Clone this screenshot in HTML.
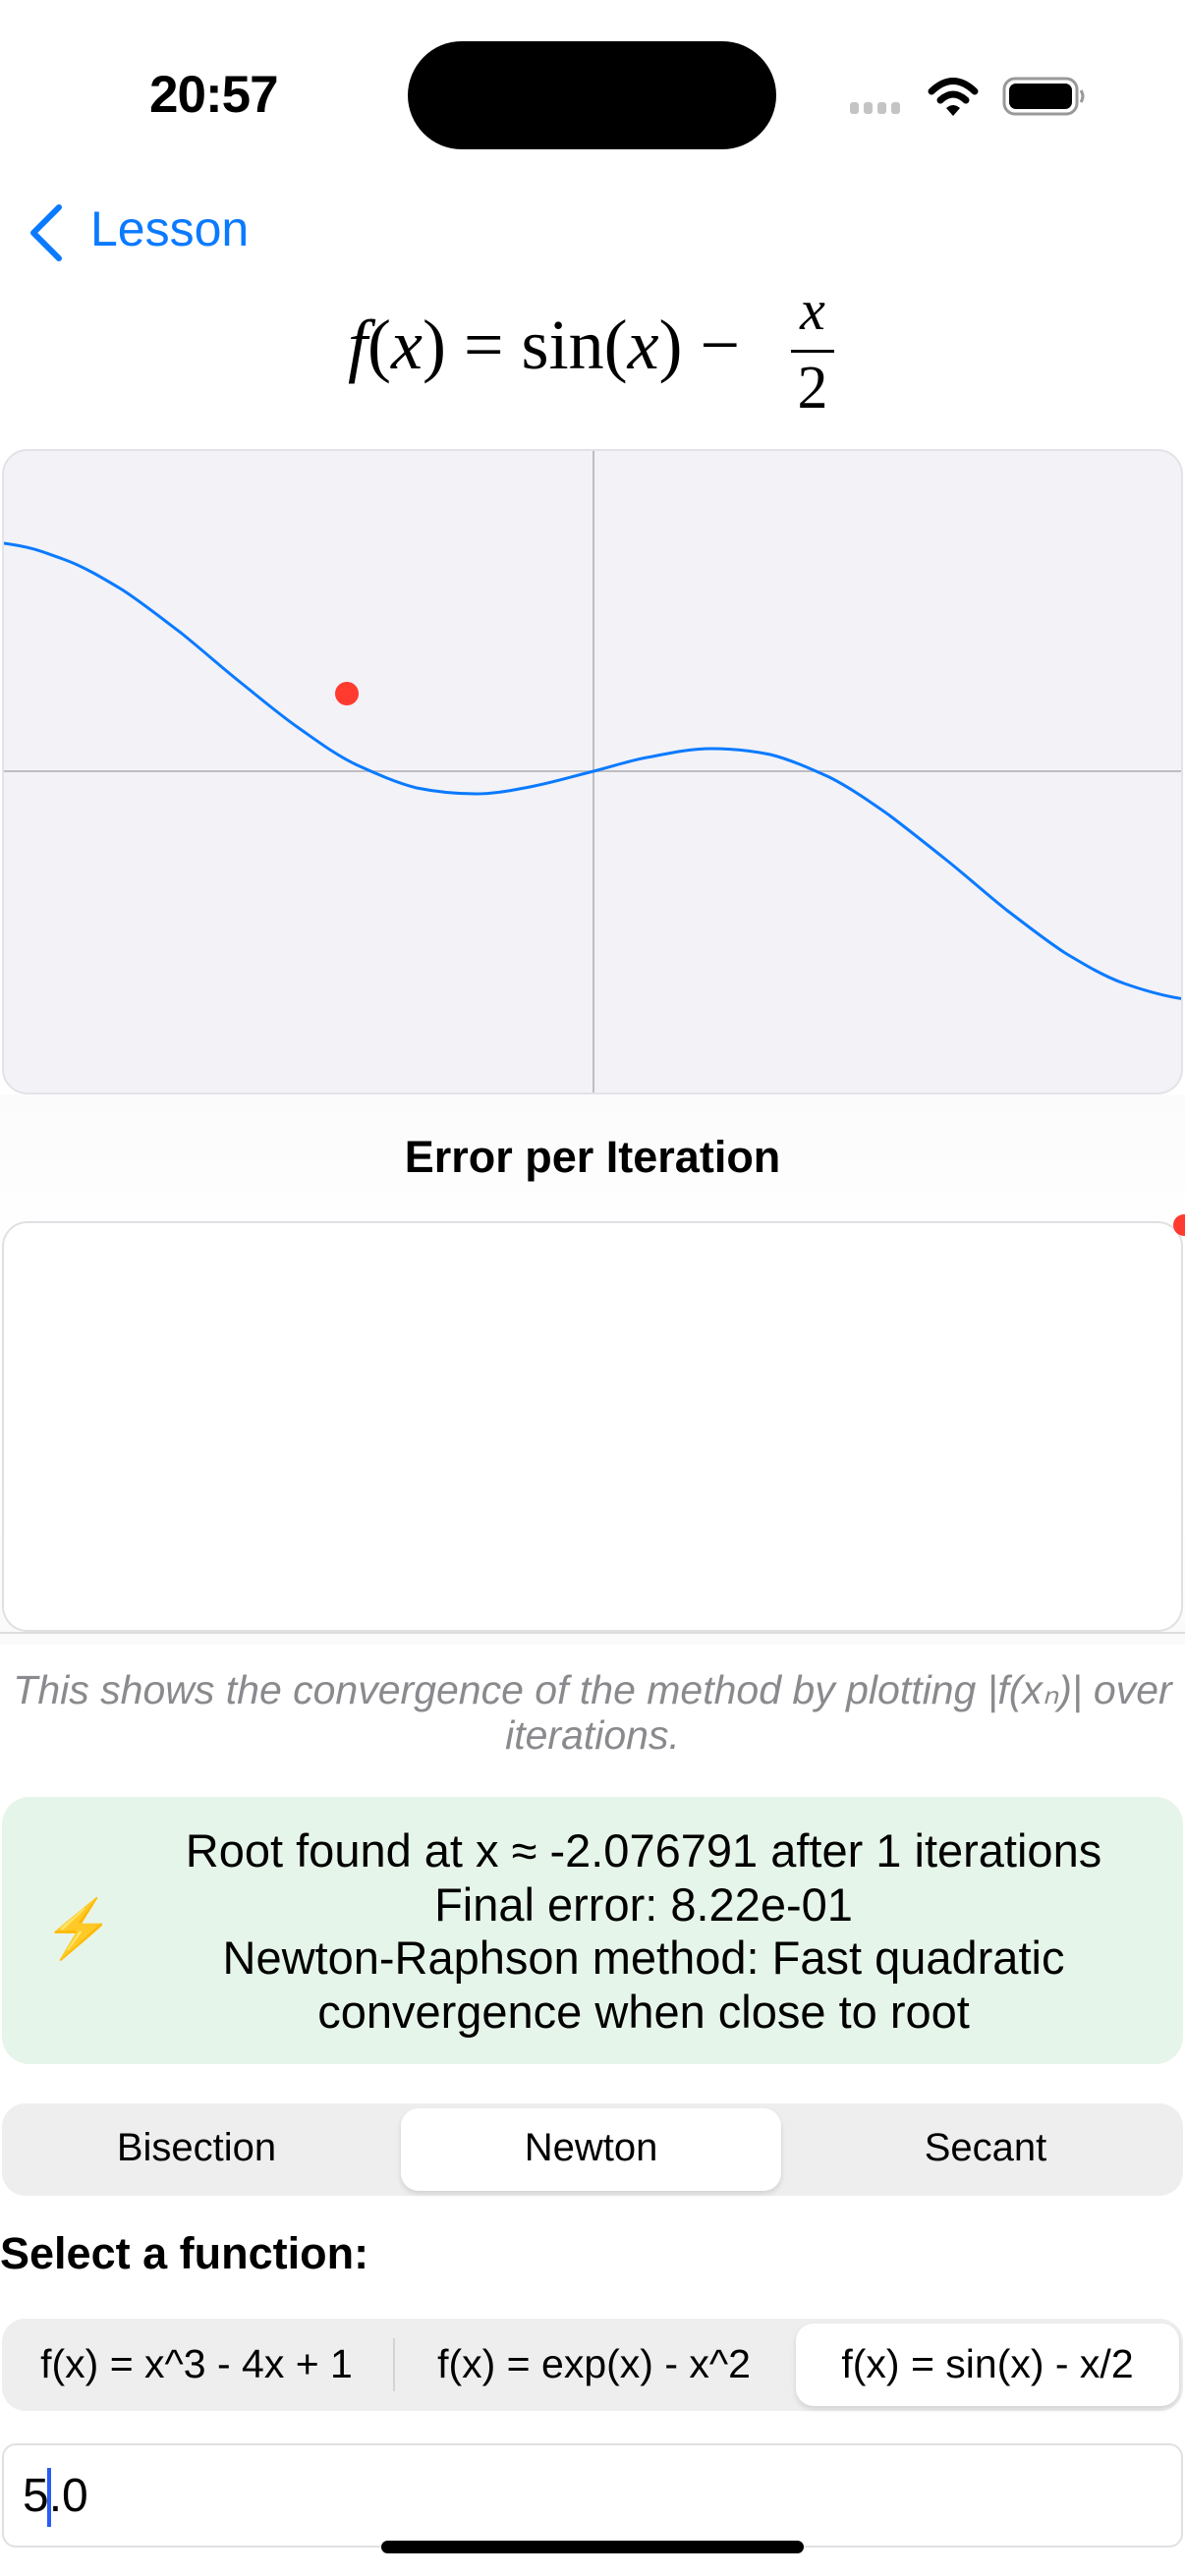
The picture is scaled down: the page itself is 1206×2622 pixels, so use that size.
<!DOCTYPE html>
<html><head><meta charset="utf-8"><style>
*{margin:0;padding:0;box-sizing:border-box}
body{width:1206px;height:2622px;background:#fff;position:relative;overflow:hidden;font-family:"Liberation Sans",sans-serif;color:#000}
.a{position:absolute}
.c{text-align:center;white-space:nowrap}
</style></head><body>
<div class="a" style="left:0;top:1114px;width:1206px;height:560px;background:linear-gradient(#fbfbfb,#fff 30%,#fff 70%,#fafafa)"></div>
<div class="a" style="left:152px;top:66px;font-size:53px;font-weight:bold;letter-spacing:-1px">20:57</div>
<div class="a" style="left:415px;top:42px;width:375px;height:110px;background:#000;border-radius:55px"></div>
<svg class="a" style="left:860px;top:70px" width="250" height="60" viewBox="0 0 250 60">
<g fill="#c4c4c4"><rect x="5" y="34" width="9" height="12" rx="3"/><rect x="19" y="34" width="9" height="12" rx="3"/><rect x="33" y="34" width="9" height="12" rx="3"/><rect x="47" y="34" width="9" height="12" rx="3"/></g>
<g fill="none" stroke="#000" stroke-width="7" stroke-linecap="round"><path d="M88 23 Q110 2 132 23"/><path d="M97 32 Q110 20 123 32"/></g>
<path d="M103 40 L110 48 L117 40 Q110 34 103 40Z" fill="#000"/>
<rect x="162" y="10" width="74" height="36" rx="11" fill="none" stroke="#999" stroke-width="3"/>
<rect x="167" y="15" width="64" height="26" rx="7" fill="#000"/>
<path d="M240 22 q4 6 0 12" stroke="#999" stroke-width="3" fill="none"/>
</svg>
<svg class="a" style="left:24px;top:206px" width="44" height="62"><path d="M36 5 L10 31 L36 57" fill="none" stroke="#0a7aff" stroke-width="6" stroke-linecap="round" stroke-linejoin="round"/></svg>
<div class="a" style="left:92px;top:204px;font-size:50px;color:#0a7aff">Lesson</div>
<div class="a" style="left:354px;top:310px;font-family:'Liberation Serif',serif;font-size:72px;white-space:nowrap"><i>f</i>(<i>x</i>) = sin(<i>x</i>) −</div>
<div class="a c" style="left:797px;top:282px;width:60px;font-family:'Liberation Serif',serif;font-size:58px"><i>x</i></div>
<div class="a" style="left:805px;top:356px;width:44px;height:3px;background:#000"></div>
<div class="a c" style="left:797px;top:360px;width:60px;font-family:'Liberation Serif',serif;font-size:62px">2</div>
<div class="a" style="left:2px;top:457px;width:1202px;height:657px;background:#f2f2f7;border:2px solid #e2e2e8;border-radius:26px;overflow:hidden">
<svg width="1202" height="657" viewBox="2 457 1202 657" style="display:block">
<line x1="602" y1="457" x2="602" y2="1114" stroke="#bdbdc2" stroke-width="2"/>
<line x1="0" y1="783" x2="1206" y2="783" stroke="#bdbdc2" stroke-width="2"/>
<path d="M2 551 C32 555 42 560 62 567 C82 574 102 586 122 598 C142 611 162 627 182 642 C202 658 222 676 242 692 C262 708 282 725 302 739 C322 753 342 768 362 777 C382 786 402 795 422 800 C442 804 462 806 482 806 C502 806 522 802 542 798 C562 794 582 788 602 783 C622 778 642 771 662 768 C682 764 702 760 722 760 C742 760 762 762 782 766 C802 771 822 780 842 789 C862 799 882 813 902 827 C922 842 942 858 962 874 C982 890 1002 908 1022 924 C1042 939 1062 955 1082 968 C1102 980 1122 992 1142 999 C1162 1006 1182 1012 1204 1015" fill="none" stroke="#0a7aff" stroke-width="3"/>
<circle cx="351" cy="704" r="12" fill="#ff3b30"/>
</svg></div>
<div class="a c" style="left:0;top:1152px;width:1206px;font-size:45px;font-weight:bold">Error per Iteration</div>
<div class="a" style="left:2px;top:1243px;width:1202px;height:418px;background:#fff;border:2px solid #e0e0e4;border-radius:26px"></div>
<div class="a" style="left:1194px;top:1236px;width:22px;height:22px;border-radius:50%;background:#ff3b30"></div>
<div class="a" style="left:0;top:1661px;width:1206px;height:2px;background:#ddd"></div>
<div class="a c" style="left:0;top:1697px;width:1206px;font-size:41px;font-style:italic;color:#8a8a8e;line-height:46px">This shows the convergence of the method by plotting |f(xₙ)| over<br>iterations.</div>
<div class="a" style="left:2px;top:1829px;width:1202px;height:272px;background:#e6f5e9;border-radius:28px"></div>
<div class="a" style="left:44px;top:1930px;font-size:58px;color:#f5b800">⚡</div>
<div class="a c" style="left:100px;top:1857px;width:1110px;font-size:47px;line-height:54.5px">Root found at x ≈ -2.076791 after 1 iterations<br>Final error: 8.22e-01<br>Newton-Raphson method: Fast quadratic<br>convergence when close to root</div>
<div class="a" style="left:2px;top:2141px;width:1202px;height:94px;background:#eeeeef;border-radius:24px"></div>
<div class="a" style="left:408px;top:2146px;width:387px;height:84px;background:#fff;border-radius:18px;box-shadow:0 3px 6px rgba(0,0,0,.12)"></div>
<div class="a c" style="left:0;top:2164px;width:400px;font-size:40px">Bisection</div>
<div class="a c" style="left:408px;top:2164px;width:387px;font-size:40px">Newton</div>
<div class="a c" style="left:800px;top:2164px;width:406px;font-size:40px">Secant</div>
<div class="a" style="left:0;top:2268px;font-size:45px;font-weight:bold">Select a function:</div>
<div class="a" style="left:2px;top:2360px;width:1202px;height:94px;background:#eeeeef;border-radius:24px"></div>
<div class="a" style="left:400px;top:2380px;width:2px;height:54px;background:#d4d4d8"></div>
<div class="a" style="left:810px;top:2365px;width:390px;height:84px;background:#fff;border-radius:18px;box-shadow:0 3px 6px rgba(0,0,0,.12)"></div>
<div class="a c" style="left:0;top:2383px;width:400px;font-size:41px">f(x) = x^3 - 4x + 1</div>
<div class="a c" style="left:402px;top:2383px;width:405px;font-size:41px">f(x) = exp(x) - x^2</div>
<div class="a c" style="left:810px;top:2383px;width:390px;font-size:41px">f(x) = sin(x) - x/2</div>
<div class="a" style="left:2px;top:2487px;width:1202px;height:106px;border:2px solid #e0e0e4;border-radius:14px;background:#fff"></div>
<div class="a" style="left:23px;top:2513px;font-size:48px">5.0</div>
<div class="a" style="left:48px;top:2512px;width:4px;height:60px;background:#2a5bf5"></div>
<div class="a" style="left:388px;top:2586px;width:430px;height:13px;background:#000;border-radius:7px"></div>
</body></html>
